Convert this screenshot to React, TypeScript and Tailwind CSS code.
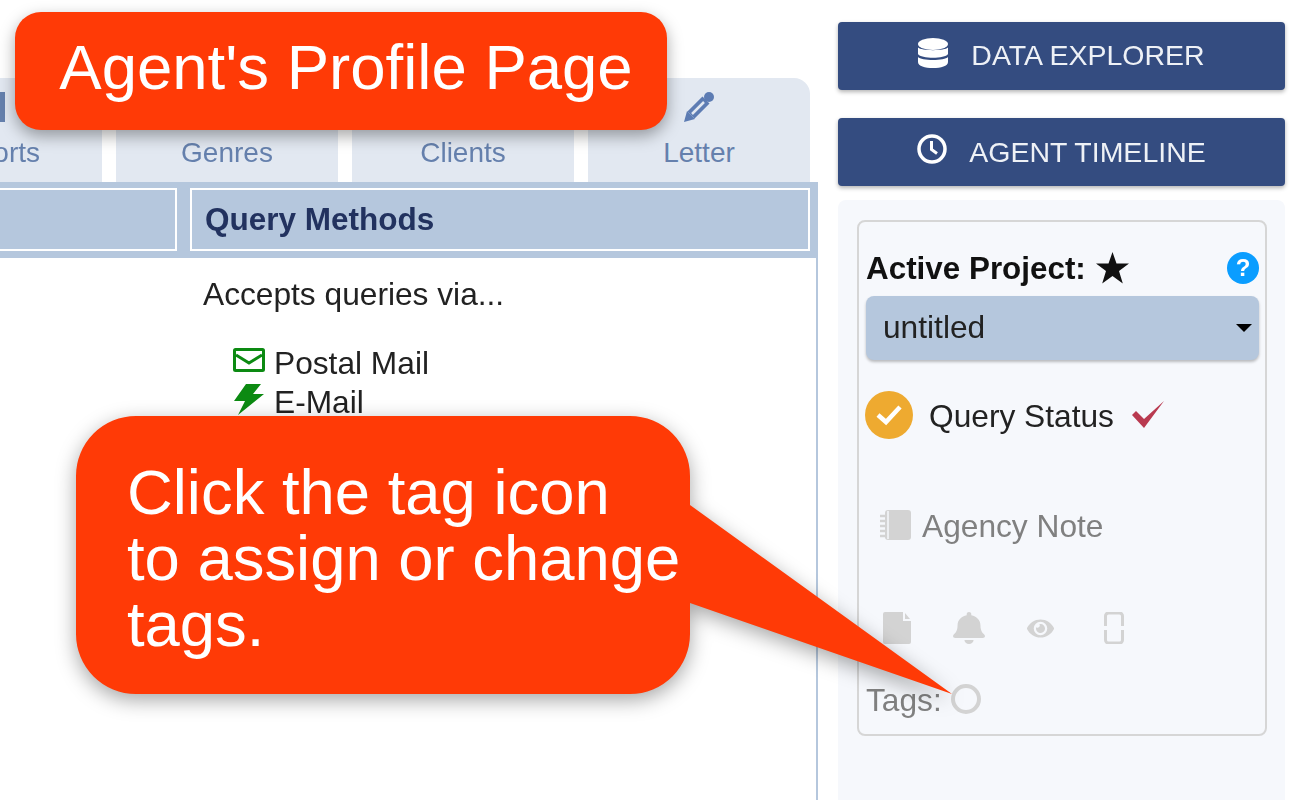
import { FaBell, FaEye } from "react-icons/fa";

const tabs = ["Genres", "Clients"];

function Notebook() {
  return (
    <svg width="31" height="30" viewBox="0 0 31 30" className="shrink-0">
      <rect x="5" y="0" width="26" height="30" rx="3" fill="#d3d3d3" />
      <path d="M0 6h8M0 11h8M0 16h8M0 21h8M0 26h8" stroke="#d3d3d3" strokeWidth="2.500" />
      <path d="M8 1v28" stroke="#f6f8fc" strokeWidth="1.500" />
    </svg>
  );
}

export default function App() {
  return (
    <div className="relative flex h-[800px] w-[1300px] overflow-hidden bg-white font-['Liberation_Sans',sans-serif] text-[#222]">
      {/* Left column */}
      <div className="flex w-[818px] shrink-0 flex-col pt-[78px] blur-[0.7px]">
        <div className="flex gap-[14px] -ml-[120px]">
          <div className="relative flex h-[104px] w-[222px] shrink-0 flex-col items-center justify-end bg-[#e2e8f1] pb-[8px] text-[28px] text-[#6580ad]">
            <svg width="28" height="30" viewBox="0 0 28 30" className="absolute left-[98px] top-[14px]">
              <path d="M21 0h6v30h-6z" fill="#6580ad" />
            </svg>
            <span>Reports</span>
          </div>
          {tabs.map((t) => (
            <div key={t} className="flex h-[104px] w-[222px] shrink-0 flex-col items-center justify-end bg-[#e2e8f1] pb-[8px] text-[28px] text-[#6580ad]">
              <span>{t}</span>
            </div>
          ))}
          <div className="relative flex h-[104px] w-[222px] shrink-0 flex-col items-center justify-end rounded-tr-[16px] bg-[#e2e8f1] pb-[8px] text-[28px] text-[#6580ad]">
            <svg width="30" height="30" viewBox="0 0 30 30" className="absolute top-[14px]">
              <path d="M0 30l3-11 8 8z" fill="#5d7cb3" />
              <path d="M7 23L22 8" stroke="#5d7cb3" strokeWidth="10" />
              <path d="M8 22L20 10" stroke="#e2e8f1" strokeWidth="2.500" />
              <circle cx="25" cy="5" r="5" fill="#5d7cb3" />
            </svg>
            <span>Letter</span>
          </div>
        </div>
        <div className="flex-1 border-r-2 border-[#b5c7dd]">
          <div className="flex h-[76px] gap-[13px] bg-[#b5c7dd] pr-[6px] pt-[6px] pb-[7px]">
            <div className="w-[177px] border-2 border-l-0 border-white" />
            <div className="flex flex-1 items-center border-2 border-white pl-[13px] text-[31.500px] font-bold text-[#22325f]">
              Query Methods
            </div>
          </div>
          <div className="pl-[203px] pt-[16px]">
            <p className="text-[31.700px] leading-[40px]">Accepts queries via...</p>
            <div className="mt-[29px] pl-[30px] text-[31.700px] leading-[40px]">
              <div className="flex items-center gap-[9px]">
                <svg width="32" height="24" viewBox="0 0 32 24" className="shrink-0 -translate-y-[3px]">
                  <rect x="1.500" y="1.500" width="29" height="21" rx="1" fill="none" stroke="#0c8a12" strokeWidth="3" />
                  <path d="M3 7l13 8 13-8" fill="none" stroke="#0c8a12" strokeWidth="3" />
                </svg>
                <span>Postal Mail</span>
              </div>
              <div className="flex items-center gap-[9px]">
                <svg width="32" height="31" viewBox="0 0 32 31" className="shrink-0 -translate-y-[4px]">
                  <path d="M13 0H28L20 10H31L5 31 12 17H1z" fill="#0c8a12" />
                </svg>
                <span className="-translate-y-[1px]">E-Mail</span>
              </div>
            </div>
          </div>
        </div>
      </div>

      {/* Right column */}
      <div className="ml-[20px] flex w-[447px] shrink-0 flex-col pt-[22px] blur-[0.7px]">
        <button className="flex h-[68px] items-center justify-center gap-[23px] rounded-[4px] bg-[#344c80] text-[28.500px] text-[#eef1f6] shadow-[0_2px_4px_rgba(0,0,0,0.3)]">
          <svg width="30" height="30" viewBox="0 0 30 30" className="shrink-0 -translate-y-[3px]">
            <ellipse cx="15" cy="6" rx="15" ry="6" fill="white" />
            <path d="M0 9.500c3 3.500 27 3.500 30 0v6.500c-3 5-27 5-30 0z" fill="white" />
            <path d="M0 19c3 4 27 4 30 0v5c0 4-7 6-15 6s-15-2-15-6z" fill="white" />
          </svg>
          <span className="-translate-y-[1px]">DATA EXPLORER</span>
        </button>
        <button className="mt-[28px] flex h-[68px] items-center justify-center gap-[22px] rounded-[4px] bg-[#344c80] text-[28.500px] text-[#eef1f6] shadow-[0_2px_4px_rgba(0,0,0,0.3)]">
          <svg width="30" height="30" viewBox="0 0 30 30" className="shrink-0 -translate-y-[3px]">
            <circle cx="15" cy="15" r="13" fill="none" stroke="white" strokeWidth="3.500" />
            <path d="M14.500 7v8.500l5.500 4" fill="none" stroke="white" strokeWidth="3" />
          </svg>
          <span>AGENT TIMELINE</span>
        </button>
        <div className="mt-[14px] flex-1 rounded-t-[8px] bg-[#f6f8fc] pl-[19px] pr-[18px] pt-[20px]">
          <div className="flex h-[516px] flex-col rounded-[8px] border-2 border-[#d6d6d6] pl-[7px] pr-[6px]">
            <div className="mt-[30px] flex h-[32px] items-center justify-between">
              <div className="flex items-center gap-[10px] text-[31.400px] font-bold text-[#111]">
                <span className="translate-y-[1px]">Active Project:</span>
                <svg width="33" height="32" viewBox="0 0 33 32">
                  <path d="M16.500 0l4 11.500h12.500l-10 7.500 3.800 12.500-10.300-7.500-10.300 7.500L10 19 0 11.500h12.500z" fill="#111" />
                </svg>
              </div>
              <div className="flex h-[32px] w-[32px] items-center justify-center rounded-full bg-[#0a9dff] text-[24px] font-bold text-white">
                ?
              </div>
            </div>
            <div className="mt-[12px] flex h-[64px] items-center justify-between rounded-[8px] bg-[#b5c7dd] pl-[17px] pr-[7px] text-[31.700px] shadow-[0_2px_3px_rgba(0,0,0,0.25)]">
              <span>untitled</span>
              <span className="h-0 w-0 border-x-[8px] border-t-[8px] border-x-transparent border-t-black" />
            </div>
            <div className="mt-[31px] flex items-center">
              <div className="-ml-[1px] flex h-[48px] w-[48px] items-center justify-center rounded-full bg-[#eeaa30]">
                <svg width="26" height="22" viewBox="0 0 26 22">
                  <path d="M2 11l8 7L24 3" fill="none" stroke="white" strokeWidth="4.500" />
                </svg>
              </div>
              <span className="ml-[16px] translate-y-[2px] text-[31.700px]">Query Status</span>
              <svg width="32" height="28" viewBox="0 0 32 28" className="ml-[18px]">
                <path d="M0 14l4-4 8 8L32 0 12 27z" fill="#b93a50" />
              </svg>
            </div>
            <div className="ml-[14px] mt-[71px] flex h-[30px] items-center gap-[11px] text-[31.700px] text-[#808080]">
              <Notebook />
              <span className="translate-y-[2px]">Agency Note</span>
            </div>
            <div className="ml-[17px] mt-[72px] flex h-[32px] items-center">
              <svg width="28" height="32" viewBox="0 0 28 32">
                <path d="M2 0H20V9H28V30a2 2 0 0 1-2 2H2a2 2 0 0 1-2-2V2a2 2 0 0 1 2-2z" fill="#d3d3d3" />
                <path d="M22 1l5 6h-5z" fill="#d3d3d3" />
              </svg>
              <FaBell className="ml-[42px] h-[32px] w-[32px] text-[#d3d3d3]" preserveAspectRatio="none" />
              <FaEye className="ml-[42px] text-[27px] text-[#d3d3d3]" />
              <svg width="20" height="32" viewBox="0 0 20 32" className="ml-[50px]">
                <path d="M1.500 14V4a3 3 0 0 1 3-3h11a3 3 0 0 1 3 3v10M1.500 18v10a3 3 0 0 0 3 3h11a3 3 0 0 0 3-3v-10" fill="none" stroke="#d3d3d3" strokeWidth="3" />
              </svg>
            </div>
            <div className="mt-[40px] flex h-[30px] items-center text-[31.700px] text-[#808080]">
              <span className="translate-y-[2px]">Tags:</span>
              <span className="ml-[9px] h-[30px] w-[30px] rounded-full border-[4px] border-[#d3d3d3]" />
            </div>
          </div>
        </div>
      </div>

      {/* Annotation callouts */}
      <div className="absolute left-[15px] top-[12px] flex h-[118px] w-[652px] items-center justify-center rounded-[26px] bg-[#ff3a06] pb-[6px] pl-[10px] text-[63.500px] text-white shadow-[0_6px_16px_rgba(0,0,0,0.35)]">
        Agent's Profile Page
      </div>
      <svg width="1300" height="800" viewBox="0 0 1300 800" className="absolute left-0 top-0 drop-shadow-[0_6px_10px_rgba(0,0,0,0.35)]">
        <path
          d="M136 416H630a60 60 0 0 1 60 60V505L952 694 690 603V634a60 60 0 0 1-60 60H136a60 60 0 0 1-60-60V476a60 60 0 0 1 60-60z"
          fill="#ff3a06"
        />
      </svg>
      <div className="absolute left-[127px] top-[459px] text-[63.400px] leading-[66px] text-white">
        Click the tag icon
        <br />
        to assign or change
        <br />
        tags.
      </div>
    </div>
  );
}
